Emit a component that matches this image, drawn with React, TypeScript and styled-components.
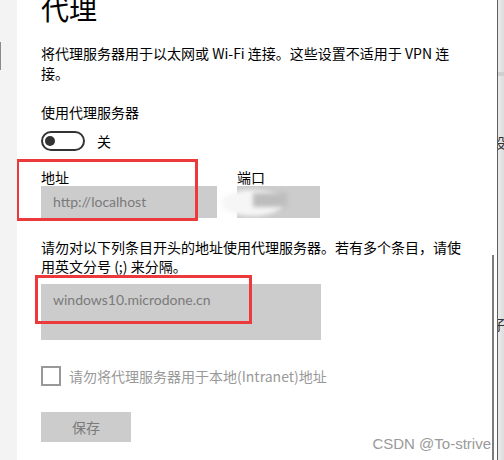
import * as React from "react";
import styled, { createGlobalStyle } from "styled-components";

const GlobalStyle = createGlobalStyle`
  html, body {
    margin: 0;
    padding: 0;
    width: 504px;
    height: 460px;
    overflow: hidden;
    background: #ffffff;
  }
  body {
    font-family: "Noto Sans CJK SC", "Noto Sans", sans-serif;
    color: #000000;
  }
`;

const Screen = styled.div`
  display: flex;
  flex-direction: row;
  width: 504px;
  height: 460px;
  overflow: hidden;
`;

const LeftStrip = styled.div`
  width: 17px;
  flex-shrink: 0;
  background: #f3f3f3;
`;

const EdgeMark = styled.div`
  margin-top: 42px;
  width: 1px;
  height: 28px;
  background: #8a8a8a;
`;

const Panel = styled.div`
  position: relative;
  flex: 1;
  padding-left: 24px;
  background: #ffffff;
  overflow: hidden;
`;

const RightStrip = styled.div`
  width: 6px;
  flex-shrink: 0;
  border-left: 1px solid #5e5e5e;
  background: linear-gradient(to right, #ececec, #dcdcdc);
  overflow: hidden;
  display: flex;
  flex-direction: column;
`;

const StripBand = styled.div`
  margin-top: 72px;
  height: 4px;
  background: #cfcfcf;
`;

const StripGlyph = styled.div<{ $top: number }>`
  margin-top: ${(p) => p.$top}px;
  margin-left: -6px;
  font-size: 14px;
  line-height: 16px;
  color: #333;
  white-space: nowrap;
`;

const Title = styled.h1`
  margin: -6px 0 0 0;
  font-size: 28px;
  line-height: 28px;
  font-weight: 400;
`;

const Paragraph = styled.div<{ $top: number; $lh?: number }>`
  margin-top: ${(p) => p.$top}px;
  font-size: 14px;
  line-height: ${(p) => p.$lh ?? 20}px;
`;

const Line = styled.div`
  white-space: nowrap;
`;

const Toggle = styled.div`
  margin-top: 9px;
  display: flex;
  align-items: center;
  gap: 12px;
  font-size: 14px;
  line-height: 20px;
`;

const Track = styled.div`
  box-sizing: border-box;
  width: 44px;
  height: 20px;
  border: 2px solid #333333;
  border-radius: 10px;
  display: flex;
  align-items: center;
  padding-left: 2px;
`;

const Knob = styled.div`
  width: 10px;
  height: 10px;
  border-radius: 50%;
  background: #333333;
`;

const FieldRow = styled.div`
  margin-top: 17px;
  display: flex;
  gap: 20px;
`;

const Field = styled.div`
  display: flex;
  flex-direction: column;
`;

const Label = styled.div`
  font-size: 14px;
  line-height: 18px;
`;

const Input = styled.div<{ $w: number; $h: number }>`
  position: relative;
  box-sizing: border-box;
  width: ${(p) => p.$w}px;
  height: ${(p) => p.$h}px;
  background: #cccccc;
  color: #7a7a7a;
  font-family: Lato, "Noto Sans CJK SC", sans-serif;
  font-size: 14px;
  line-height: 20px;
  padding: 6px 12px;
`;

const Smudge = styled.div`
  position: absolute;
  left: -16px;
  top: 4px;
  width: 62px;
  height: 26px;
  border-radius: 50%;
  background: #f6f6f6;
  filter: blur(2px);
`;

const SmudgeDark = styled.div`
  position: absolute;
  left: 16px;
  top: 7px;
  width: 34px;
  height: 14px;
  background: #bdbdbd;
  filter: blur(2px);
`;

const CheckRow = styled.div`
  margin-top: 26px;
  display: flex;
  align-items: center;
  gap: 8px;
  font-size: 14px;
  line-height: 20px;
  color: #999999;
`;

const Box = styled.div`
  box-sizing: border-box;
  width: 20px;
  height: 20px;
  border: 2px solid #999999;
`;

const SaveButton = styled.div`
  margin-top: 26px;
  width: 90px;
  height: 30px;
  background: #cccccc;
  color: #7a7a7a;
  font-size: 14px;
  display: flex;
  align-items: center;
  justify-content: center;
`;

const Highlight = styled.div<{ $x: number; $y: number; $w: number; $h: number }>`
  position: absolute;
  box-sizing: border-box;
  left: ${(p) => p.$x}px;
  top: ${(p) => p.$y}px;
  width: ${(p) => p.$w}px;
  height: ${(p) => p.$h}px;
  border: 3px solid #ec3a3c;
  pointer-events: none;
`;

const Scrollbar = styled.div`
  position: absolute;
  right: 3px;
  top: 255px;
  bottom: 0;
  width: 2px;
  background: #7d7d7d;
`;

const Watermark = styled.div`
  position: absolute;
  right: 6px;
  top: 434px;
  font-family: "Liberation Sans", Arial, sans-serif;
  font-size: 15px;
  line-height: 20px;
  color: #9a9a9a;
  white-space: nowrap;
`;

const App: React.FC = () => {
  return (
    <Screen>
      <GlobalStyle />
      <LeftStrip>
        <EdgeMark />
      </LeftStrip>
      <Panel>
        <Title>代理</Title>
        <Paragraph $top={21}>
          <Line>将代理服务器用于以太网或 Wi-Fi 连接。这些设置不适用于 VPN 连</Line>
          <Line>接。</Line>
        </Paragraph>
        <Paragraph $top={19}>
          <Line>使用代理服务器</Line>
        </Paragraph>
        <Toggle>
          <Track>
            <Knob />
          </Track>
          关
        </Toggle>
        <FieldRow>
          <Field>
            <Label>地址</Label>
            <Input $w={176} $h={32}>http://localhost</Input>
          </Field>
          <Field>
            <Label>端口</Label>
            <Input $w={83} $h={32}>
              <Smudge />
              <SmudgeDark />
            </Input>
          </Field>
        </FieldRow>
        <Paragraph $top={20} $lh={19}>
          <Line>请勿对以下列条目开头的地址使用代理服务器。若有多个条目，请使</Line>
          <Line>用英文分号 (;) 来分隔。</Line>
        </Paragraph>
        <Paragraph $top={8}>
          <Input $w={280} $h={56}>windows10.microdone.cn</Input>
        </Paragraph>
        <CheckRow>
          <Box />
          请勿将代理服务器用于本地(Intranet)地址
        </CheckRow>
        <SaveButton>保存</SaveButton>

        <Highlight $x={-1} $y={159} $w={182} $h={62} />
        <Highlight $x={18} $y={275} $w={217} $h={49} />
        <Scrollbar />
        <Watermark>CSDN @To-strive</Watermark>
      </Panel>
      <RightStrip>
        <StripBand />
        <StripGlyph $top={58}>设</StripGlyph>
        <StripGlyph $top={166}>子</StripGlyph>
      </RightStrip>
    </Screen>
  );
};

export default App;
